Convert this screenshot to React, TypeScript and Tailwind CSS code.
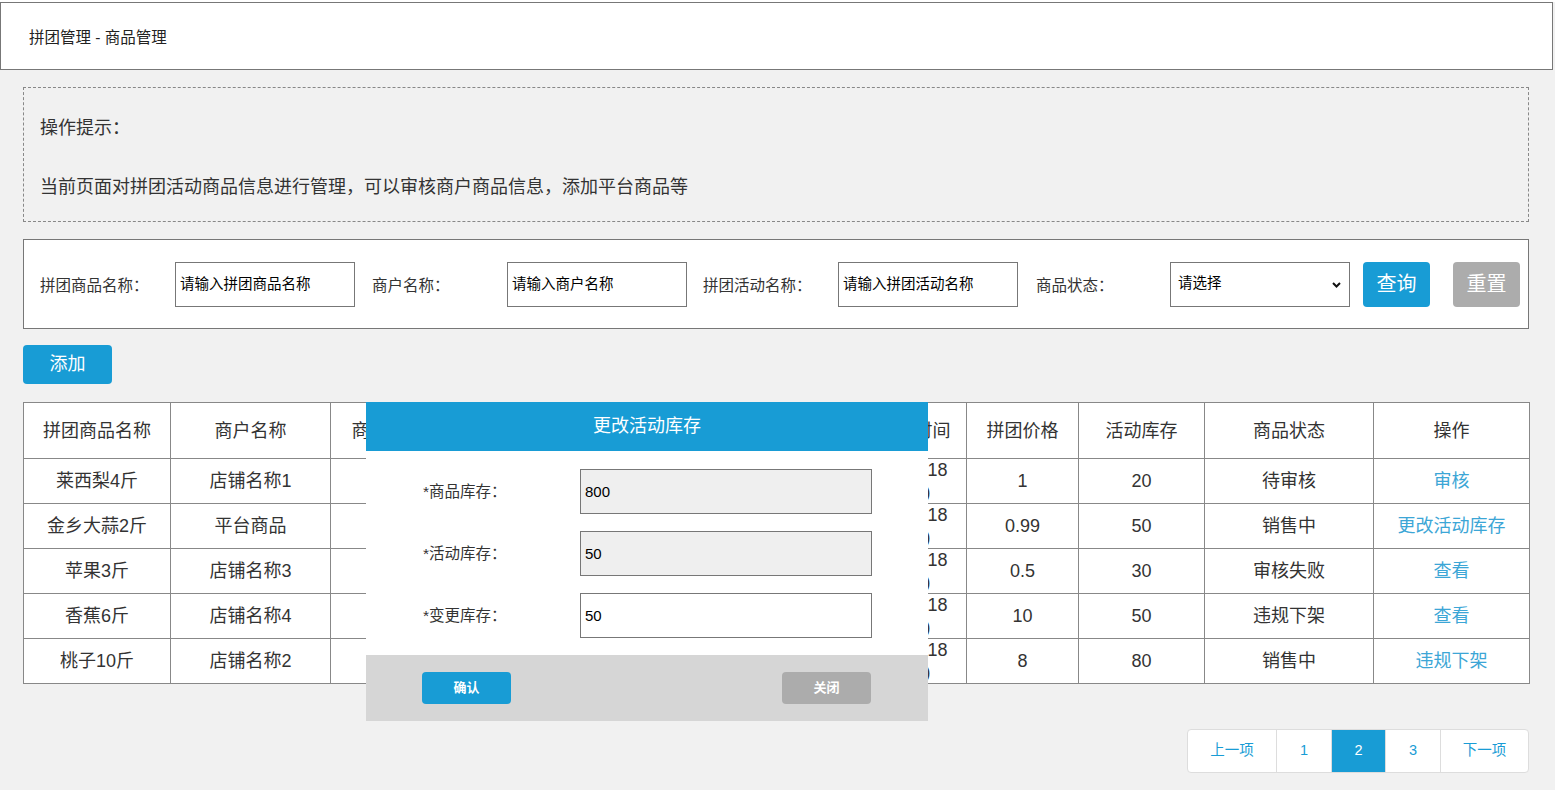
import React from 'react'

const FONT = '"Liberation Sans", "Noto Sans CJK SC", sans-serif'

type Row = {
  name: string
  shop: string
  category: string
  activity: string
  time: [string, string]
  price: string
  stock: string
  status: string
  action: string
}

const rows: Row[] = [
  { name: '莱西梨4斤', shop: '店铺名称1', category: '水果生鲜', activity: '中秋拼团活动', time: ['9.8-9.18', '(10)'], price: '1', stock: '20', status: '待审核', action: '审核' },
  { name: '金乡大蒜2斤', shop: '平台商品', category: '蔬菜', activity: '中秋拼团活动', time: ['9.8-9.18', '(10)'], price: '0.99', stock: '50', status: '销售中', action: '更改活动库存' },
  { name: '苹果3斤', shop: '店铺名称3', category: '水果生鲜', activity: '中秋拼团活动', time: ['9.8-9.18', '(10)'], price: '0.5', stock: '30', status: '审核失败', action: '查看' },
  { name: '香蕉6斤', shop: '店铺名称4', category: '水果生鲜', activity: '中秋拼团活动', time: ['9.8-9.18', '(10)'], price: '10', stock: '50', status: '违规下架', action: '查看' },
  { name: '桃子10斤', shop: '店铺名称2', category: '水果生鲜', activity: '中秋拼团活动', time: ['9.8-9.18', '(10)'], price: '8', stock: '80', status: '销售中', action: '违规下架' },
]

const headers = ['拼团商品名称', '商户名称', '商品分类名称', '拼团活动名称', '活动时间', '拼团价格', '活动库存', '商品状态', '操作']
const widths = [147, 160, 150, 382, 104, 112, 126, 169, 156]

const SearchField = ({ label, placeholder, className = '' }: { label: string; placeholder: string; className?: string }) => (
  <div className={`flex items-center ${className}`}>
    <span className="w-[135px] translate-y-[2px] text-[15.5px] text-[#333]">{label}</span>
    <input
      className="h-[45px] w-[180px] border border-[#777] bg-white px-[4px] text-[14.5px] text-black outline-none placeholder:text-black"
      placeholder={placeholder}
    />
  </div>
)

const StockModal = () => (
  <div className="absolute top-0 left-[343px] z-10 flex h-[319px] w-[562px] flex-col">
    <div className="flex h-[49px] items-center justify-center bg-[#189cd5] text-[18px] text-white">更改活动库存</div>
    <div className="flex flex-1 flex-col gap-[17px] bg-white pt-[18px] pl-[57px]">
      {[
        { label: '*商品库存：', value: '800', disabled: true },
        { label: '*活动库存：', value: '50', disabled: true },
        { label: '*变更库存：', value: '50', disabled: false },
      ].map(item => (
        <div key={item.label} className="flex h-[45px] items-center">
          <span className="w-[157px] text-[15.5px] text-[#333]">{item.label}</span>
          <input
            readOnly
            value={item.value}
            className={`h-[45px] w-[292px] border border-[#777] px-[4px] text-[15px] text-black outline-none ${
              item.disabled ? 'bg-[#efefef]' : 'bg-white'
            }`}
          />
        </div>
      ))}
    </div>
    <div className="flex h-[66px] items-start justify-between bg-[#d6d6d6] px-[56px] pt-[17px]">
      <button className="h-[32px] w-[89px] rounded-[4px] bg-[#189cd5] text-[13px] font-bold text-white">确认</button>
      <button className="mr-[1px] h-[32px] w-[89px] rounded-[4px] bg-[#acacac] text-[13px] font-bold text-white">关闭</button>
    </div>
  </div>
)

export default function App() {
  return (
    <div className="min-h-[790px] bg-[#f1f1f1] pb-[18px]" style={{ fontFamily: FONT }}>
      <div className="mt-[2px] mr-[2px] flex h-[68px] items-center border border-[#777] bg-white pt-[4px] pl-[28px] text-[15.5px] text-[#222]">
        拼团管理 - 商品管理
      </div>

      <div className="mr-[3px] px-[23px]">
        <div className="mt-[17px] h-[135px] border border-dashed border-[#888] pt-[27px] pl-[16px] text-[18px] leading-[26px] text-[#333]">
          <p>操作提示：</p>
          <p className="mt-[33px]">当前页面对拼团活动商品信息进行管理，可以审核商户商品信息，添加平台商品等</p>
        </div>

        <div className="mt-[17px] flex h-[90px] items-center border border-[#777] bg-white pl-[16px]">
          <SearchField label="拼团商品名称：" placeholder="请输入拼团商品名称" />
          <SearchField className="ml-[17px]" label="商户名称：" placeholder="请输入商户名称" />
          <SearchField className="ml-[16px]" label="拼团活动名称：" placeholder="请输入拼团活动名称" />
          <div className="ml-[18px] flex items-center">
            <span className="w-[134px] translate-y-[2px] text-[15.5px] text-[#333]">商品状态：</span>
            <div className="relative h-[45px] w-[180px] border border-[#777] bg-white">
              <span className="absolute top-1/2 left-[7px] -translate-y-1/2 text-[14.5px] text-black">请选择</span>
              <svg className="absolute top-[19px] right-[8px]" width="9" height="6" viewBox="0 0 9 6">
                <path d="M1 1 L4.5 4.5 L8 1" fill="none" stroke="#111" strokeWidth="2" />
              </svg>
            </div>
          </div>
          <button className="ml-[13px] h-[45px] w-[67px] rounded-[4px] bg-[#189cd5] text-[20px] text-white">查询</button>
          <button className="ml-[23px] h-[45px] w-[67px] rounded-[4px] bg-[#acacac] text-[20px] text-white">重置</button>
        </div>

        <button className="mt-[16px] h-[39px] w-[89px] rounded-[4px] bg-[#189cd5] text-[18px] text-white">添加</button>

        <div className="relative mt-[18px]">
          <table className="w-[1506px] table-fixed border-collapse bg-white text-[18px] text-[#333]">
            <colgroup>
              {widths.map((w, i) => (
                <col key={i} style={{ width: w }} />
              ))}
            </colgroup>
            <thead>
              <tr>
                {headers.map(h => (
                  <th key={h} className="h-[56px] border border-[#888] pt-[1px] text-center font-normal whitespace-nowrap">
                    {h}
                  </th>
                ))}
              </tr>
            </thead>
            <tbody>
              {rows.map(r => (
                <tr key={r.name}>
                  <td className="h-[45px] border border-[#888] text-center">{r.name}</td>
                  <td className="border border-[#888] text-center">{r.shop}</td>
                  <td className="border border-[#888] text-center">{r.category}</td>
                  <td className="border border-[#888] text-center">{r.activity}</td>
                  <td className="border border-[#888] text-center leading-[22px]">
                    <div>{r.time[0]}</div>
                    <div>{r.time[1]}</div>
                  </td>
                  <td className="border border-[#888] text-center">{r.price}</td>
                  <td className="border border-[#888] text-center">{r.stock}</td>
                  <td className="border border-[#888] text-center">{r.status}</td>
                  <td className="border border-[#888] text-center whitespace-nowrap text-[#3ca6d6]">{r.action}</td>
                </tr>
              ))}
            </tbody>
          </table>
          <StockModal />
        </div>

        <div className="mt-[45px] flex justify-end">
          <div className="flex h-[44px] overflow-hidden rounded-[4px] border border-[#ddd] bg-white text-[14.5px] text-[#189cd5]">
            <span className="flex w-[88px] items-center justify-center">上一项</span>
            <span className="flex w-[55px] items-center justify-center border-l border-[#ddd]">1</span>
            <span className="flex w-[54px] items-center justify-center border-l border-[#ddd] bg-[#189cd5] text-white">2</span>
            <span className="flex w-[55px] items-center justify-center border-l border-[#ddd]">3</span>
            <span className="flex w-[88px] items-center justify-center border-l border-[#ddd]">下一项</span>
          </div>
        </div>
      </div>
    </div>
  )
}
